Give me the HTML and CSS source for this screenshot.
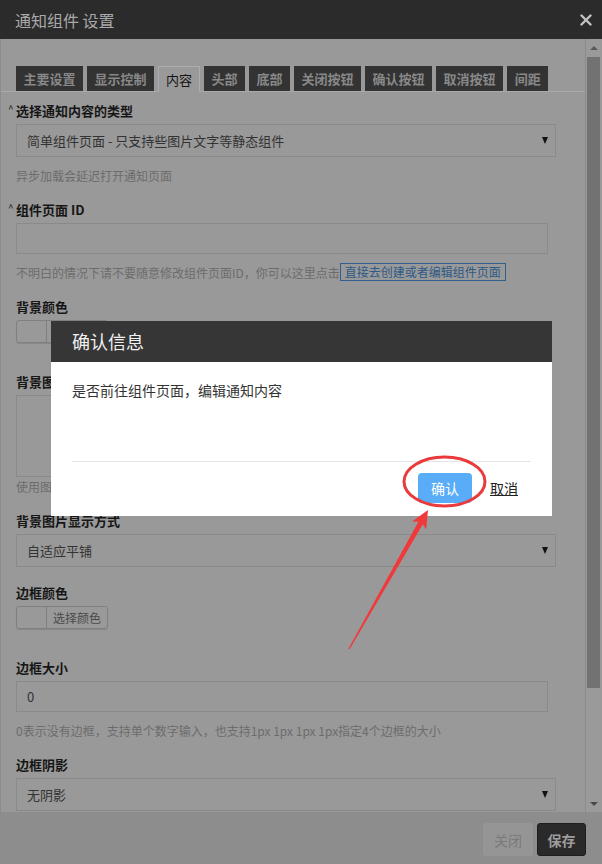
FILE: index.html
```html
<!DOCTYPE html>
<html lang="zh-CN">
<head>
<meta charset="utf-8">
<title>通知组件 设置</title>
<link rel="stylesheet" href="styles.css">
</head>
<body>
<div class="window">
  <header class="titlebar">
    <span class="title">通知组件 设置</span>
    <svg class="close" width="12" height="12" viewBox="0 0 12 12"><path d="M1.5 1.5L10.5 10.5M10.5 1.5L1.5 10.5" stroke="#c4c4c4" stroke-width="2.4" stroke-linecap="round"/></svg>
  </header>
  <div class="main">
    <div class="content">
      <nav class="tabs">
        <span class="tab">主要设置</span>
        <span class="tab">显示控制</span>
        <span class="tab active">内容</span>
        <span class="tab">头部</span>
        <span class="tab">底部</span>
        <span class="tab">关闭按钮</span>
        <span class="tab">确认按钮</span>
        <span class="tab">取消按钮</span>
        <span class="tab">间距</span>
      </nav>
      <div class="form">
        <div class="group first">
          <div class="label"><span class="caret">^</span>选择通知内容的类型</div>
          <div class="select"><span>简单组件页面 - 只支持些图片文字等静态组件</span><span class="arrow"></span></div>
          <div class="help">异步加载会延迟打开通知页面</div>
        </div>
        <div class="group">
          <div class="label"><span class="caret">^</span>组件页面 ID</div>
          <div class="input"></div>
          <div class="help">不明白的情况下请不要随意修改组件页面ID，你可以这里点击<span class="link">直接去创建或者编辑组件页面</span></div>
        </div>
        <div class="group picker-group">
          <div class="label">背景颜色</div>
          <div class="picker"><span class="swatch"></span><span class="picker-text blank"></span></div>
        </div>
        <div class="group">
          <div class="label">背景图片</div>
          <div class="imgbox"></div>
          <div class="help tight">使用图片作为背景，可以点击上传</div>
        </div>
        <div class="group">
          <div class="label">背景图片显示方式</div>
          <div class="select"><span>自适应平铺</span><span class="arrow"></span></div>
        </div>
        <div class="group picker-group">
          <div class="label">边框颜色</div>
          <div class="picker"><span class="swatch"></span><span class="picker-text">选择颜色</span></div>
        </div>
        <div class="group">
          <div class="label">边框大小</div>
          <div class="input">0</div>
          <div class="help">0表示没有边框，支持单个数字输入，也支持1px 1px 1px 1px指定4个边框的大小</div>
        </div>
        <div class="group">
          <div class="label">边框阴影</div>
          <div class="select"><span>无阴影</span><span class="arrow"></span></div>
        </div>
      </div>
    </div>
    <div class="scrollbar">
      <span class="sb-btn"><span class="tri-up"></span></span>
      <span class="sb-thumb"></span>
      <span class="sb-track"></span>
      <span class="sb-btn down"><span class="tri-down"></span></span>
    </div>
  </div>
  <footer class="footer">
    <button class="btn btn-close">关闭</button>
    <button class="btn btn-save">保存</button>
  </footer>
</div>

<div class="dialog">
  <div class="dialog-head">确认信息</div>
  <div class="dialog-body">是否前往组件页面，编辑通知内容</div>
  <div class="dialog-foot">
    <button class="ok">确认</button>
    <span class="cancel">取消</span>
  </div>
</div>

<svg class="annot" width="602" height="864" viewBox="0 0 602 864">
  <ellipse cx="444.5" cy="481.5" rx="40.5" ry="24.5" fill="none" stroke="#ea3a3c" stroke-width="3"/>
  <polygon fill="#f0393b" points="428,510 426.1,529.6 422.8,524.2 349.6,649.3 348.4,648.7 418.4,521.8 412.1,521.6"/>
</svg>
</body>
</html>
```

FILE: styles.css
```css
* { box-sizing: border-box; }

html, body {
  margin: 0;
  padding: 0;
}

body {
  width: 602px;
  height: 864px;
  overflow: hidden;
  position: relative;
  background: #999;
  font-family: "Noto Sans CJK SC", "Noto Sans", sans-serif;
  color: #222;
}

.window {
  display: flex;
  flex-direction: column;
  height: 864px;
}

.titlebar {
  height: 39px;
  flex: none;
  background: #2b2b2b;
  display: flex;
  align-items: center;
  justify-content: space-between;
  padding: 0 10px 0 15px;
}

.title {
  font-size: 16px;
  color: #a9a9a9;
  line-height: 20px;
}

.close { display: block; }

.main {
  flex: 1;
  display: flex;
  min-height: 0;
  border-left: 1px solid #8c8c8c;
}

.content {
  flex: 1;
  overflow: hidden;
}

.tabs {
  display: flex;
  gap: 4px;
  margin-top: 27px;
  padding-left: 15px;
  border-bottom: 1px solid #a9a9a9;
  height: 26px;
  align-items: flex-end;
}

.tab {
  height: 25px;
  padding: 0 7.5px;
  background: #333;
  color: #888;
  font-size: 13px;
  font-weight: bold;
  line-height: 25px;
  white-space: nowrap;
}

.tab.active {
  height: 26px;
  margin-bottom: -1px;
  padding: 0 7px;
  background: #999;
  border: 1px solid #adadad;
  border-bottom: none;
  color: #151515;
  font-weight: normal;
  line-height: 26px;
}

.form {
  padding: 0 29px 0 15px;
}

.group { margin-bottom: 17px; }
.group.first { margin-top: 10px; }
.picker-group { padding-bottom: 13px; }

.label {
  font-size: 13px;
  font-weight: bold;
  line-height: 18px;
  height: 18px;
  color: #161616;
  margin-bottom: 4px;
}

.caret {
  display: inline-block;
  width: 8px;
  margin-left: -8px;
  font-size: 10px;
  font-weight: normal;
  vertical-align: top;
  line-height: 14px;
}

.select {
  height: 33px;
  border: 1px solid #8a8a8a;
  display: flex;
  align-items: center;
  justify-content: space-between;
  padding: 0 7px 0 10px;
  font-size: 13px;
  color: #333;
}

.arrow {
  width: 0;
  height: 0;
  border-left: 3.5px solid transparent;
  border-right: 3.5px solid transparent;
  border-top: 7px solid #111;
}

.input {
  height: 31px;
  margin-right: 8px;
  border: 1px solid #8a8a8a;
  padding: 0 10px;
  font-size: 13px;
  line-height: 29px;
  color: #333;
}

.help {
  margin-top: 10px;
  font-size: 12px;
  line-height: 17px;
  height: 17px;
  color: #6c6c6c;
  white-space: nowrap;
}

.help.tight { margin-top: 1px; }

.link {
  display: inline-block;
  vertical-align: top;
  border: 1px solid #2d5f8f;
  color: #2d5a86;
  padding: 0 4px;
  line-height: 16px;
  height: 18px;
  margin-top: -1px;
}

.picker {
  display: flex;
  width: max-content;
  height: 23px;
  border: 1px solid #808080;
  border-radius: 3px;
  box-shadow: 0 1px 1px rgba(0, 0, 0, 0.12);
}

.swatch {
  width: 30px;
  border-right: 1px solid #808080;
}

.picker-text {
  padding: 0 6px;
  font-size: 12px;
  line-height: 21px;
  color: #4a4a4a;
}

.picker-text.blank { width: 60px; }

.imgbox {
  width: 200px;
  height: 82px;
  border: 1px solid #8a8a8a;
}

.scrollbar {
  width: 17px;
  flex: none;
  display: flex;
  flex-direction: column;
  border-left: 1px solid #8b8b8b;
  background: #9a9a9a;
}

.sb-btn {
  height: 18px;
  display: flex;
  align-items: center;
  justify-content: center;
  flex: none;
}

.sb-btn.down { height: 17px; }

.tri-up, .tri-down {
  width: 0;
  height: 0;
  border-left: 4px solid transparent;
  border-right: 4px solid transparent;
}
.tri-up { border-bottom: 4px solid #5a5a5a; }
.tri-down { border-top: 4px solid #4a4a4a; }

.sb-thumb {
  height: 631px;
  flex: none;
  margin: 0 2px 0 1px;
  background: #727272;
}

.sb-track { flex: 1; }

.footer {
  height: 52px;
  flex: none;
  background: #8d8d8d;
  display: flex;
  justify-content: flex-end;
  align-items: flex-start;
  gap: 4px;
  padding: 11px 16px 0 0;
}

.btn {
  height: 33px;
  font-family: inherit;
  font-size: 14px;
  border-radius: 3px;
  padding: 0;
}

.btn-close {
  width: 50px;
  background: #959595;
  border: none;
  color: #7a7a7a;
}

.btn-save {
  width: 49px;
  background: #2a2a2a;
  border: 1px solid #1e1e1e;
  color: #9c9c9c;
  font-weight: bold;
}

.dialog {
  position: absolute;
  left: 51px;
  top: 321px;
  width: 501px;
  height: 195px;
  background: #fff;
}

.dialog-head {
  height: 41px;
  background: #363636;
  color: #f0f0f0;
  font-size: 18px;
  line-height: 41px;
  padding-left: 21px;
}

.dialog-body {
  margin: 0 21px;
  padding-top: 18px;
  height: 100px;
  border-bottom: 1px solid #e4e4e4;
  font-size: 14px;
  line-height: 20px;
  color: #333;
}

.dialog-foot {
  display: flex;
  justify-content: flex-end;
  align-items: center;
  padding: 11px 34px 0 0;
}

.ok {
  height: 30px;
  width: 54px;
  border: none;
  border-radius: 4px;
  background: #59acf8;
  color: #fff;
  font-family: inherit;
  font-size: 14px;
  padding: 0;
}

.cancel {
  margin-left: 18px;
  font-size: 14px;
  color: #222;
  text-decoration: underline;
}

.annot {
  position: absolute;
  left: 0;
  top: 0;
  pointer-events: none;
}
```
